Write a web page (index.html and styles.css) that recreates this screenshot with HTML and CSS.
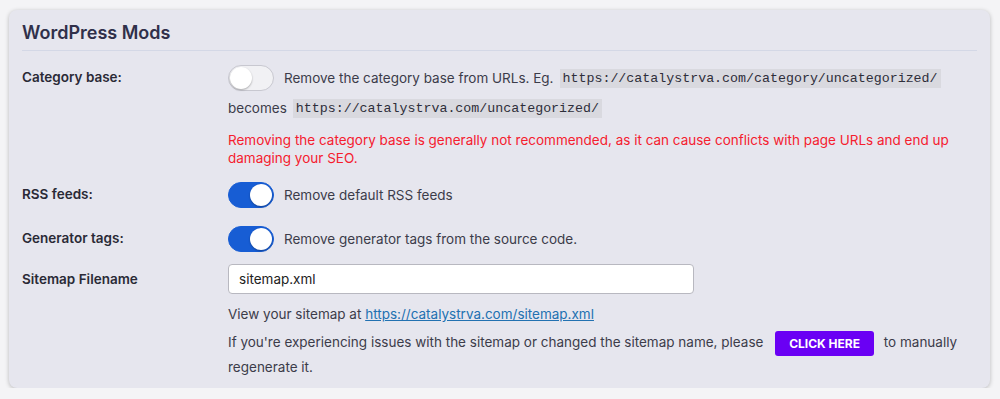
FILE: index.html
```html
<!DOCTYPE html>
<html lang="en">
<head>
    <meta charset="UTF-8">
    <title>WordPress Mods</title>
    <link rel="stylesheet" href="styles.css">
</head>
<body>
    <div class="card">
        <h2 class="card-title">WordPress Mods</h2>

        <div class="row">
            <div class="label">Category base:</div>
            <div class="control">
                <p class="line">
                    <span class="toggle"><span class="knob"></span></span>
                    Remove the category base from URLs. Eg. <code>https://catalystrva.com/category/uncategorized/</code>
                </p>
                <p class="line line-2">becomes <code>https://catalystrva.com/uncategorized/</code></p>
                <p class="warn">Removing the category base is generally not recommended, as it can cause conflicts with page URLs and end up damaging your SEO.</p>
            </div>
        </div>

        <div class="row">
            <div class="label">RSS feeds:</div>
            <div class="control">
                <p class="line"><span class="toggle on"><span class="knob"></span></span> Remove default RSS feeds</p>
            </div>
        </div>

        <div class="row">
            <div class="label">Generator tags:</div>
            <div class="control">
                <p class="line"><span class="toggle on"><span class="knob"></span></span> Remove generator tags from the source code.</p>
            </div>
        </div>

        <div class="row sitemap">
            <div class="label">Sitemap Filename</div>
            <div class="control">
                <input class="text-input" type="text" value="sitemap.xml">
                <p class="note">View your sitemap at <a href="#">https://catalystrva.com/sitemap.xml</a></p>
                <p class="note regen">If you're experiencing issues with the sitemap or changed the sitemap name, please <button class="btn">CLICK HERE</button> to manually regenerate it.</p>
            </div>
        </div>
    </div>
</body>
</html>
```

FILE: styles.css
```css
body {
    margin: 0;
    padding: 10px 10px 0 9px;
    background: #f4f4f6;
    font-family: Inter, "Noto Sans", sans-serif;
    font-size: 13.5px;
    color: #3c3c4a;
}
.card {
    background: #e6e6ee;
    border-radius: 8px;
    box-shadow: 0 1px 4px rgba(0,0,0,0.25);
    padding: 12px 13px 13px 13px;
    height: 353px;
}
.card-title {
    margin: 0;
    font-size: 18px;
    font-weight: 600;
    color: #30304a;
    padding-bottom: 7px;
    border-bottom: 1px solid #d4d8e6;
}
.row {
    display: grid;
    grid-template-columns: 206px 1fr;
}
.row:first-of-type {
    margin-top: 14px;
}
.label {
    font-weight: 600;
    color: #2a2a36;
    padding-top: 4px;
}
.control p {
    margin: 0;
}
.line {
    display: flex;
    align-items: center;
    gap: 0 6px;
    height: 26px;
    white-space: nowrap;
}
.line-2 {
    margin-top: 4px !important;
}
.toggle {
    display: inline-block;
    position: relative;
    width: 44px;
    height: 24px;
    border-radius: 13px;
    background: #f1f1f4;
    border: 1px solid #c8c8d0;
    margin-right: 4px;
    flex-shrink: 0;
}
.toggle.on {
    background: #175dd4;
    border-color: #175dd4;
}
.knob {
    position: absolute;
    top: 1px;
    left: 1px;
    width: 22px;
    height: 22px;
    border-radius: 50%;
    background: white;
    box-shadow: 0 1px 2px rgba(0,0,0,0.3);
}
.toggle.on .knob {
    left: 21px;
}
code {
    font-family: "Liberation Mono", monospace;
    font-size: 13.3px;
    background: #d9d9df;
    padding: 2px 3px;
    color: #2e2e3a;
}
.warn {
    color: #f5202e;
    line-height: 18px;
    margin-top: 10px !important;
    margin-bottom: 15px !important;
}
.row + .row .line {
    margin-bottom: 18px;
}
.sitemap {
    margin-top: -6px;
}
.sitemap .label {
    padding-top: 7px;
}
.text-input {
    width: 466px;
    height: 30px;
    box-sizing: border-box;
    border: 1px solid #b8b8c0;
    border-radius: 4px;
    padding: 0 10px;
    font-family: Inter, sans-serif;
    font-size: 13.5px;
    color: #222;
    background: white;
}
.note {
    line-height: 22px;
    margin-top: 9px !important;
}
.regen {
    margin-top: 6px !important;
}
a {
    color: #2271b1;
}
.btn {
    background: #6a00f4;
    color: white;
    border: none;
    border-radius: 3px;
    font-family: Inter, sans-serif;
    font-weight: 700;
    font-size: 12px;
    line-height: 13px;
    padding: 6px 14px;
    margin: 0 6px 0 8px;
    vertical-align: middle;
}
```
